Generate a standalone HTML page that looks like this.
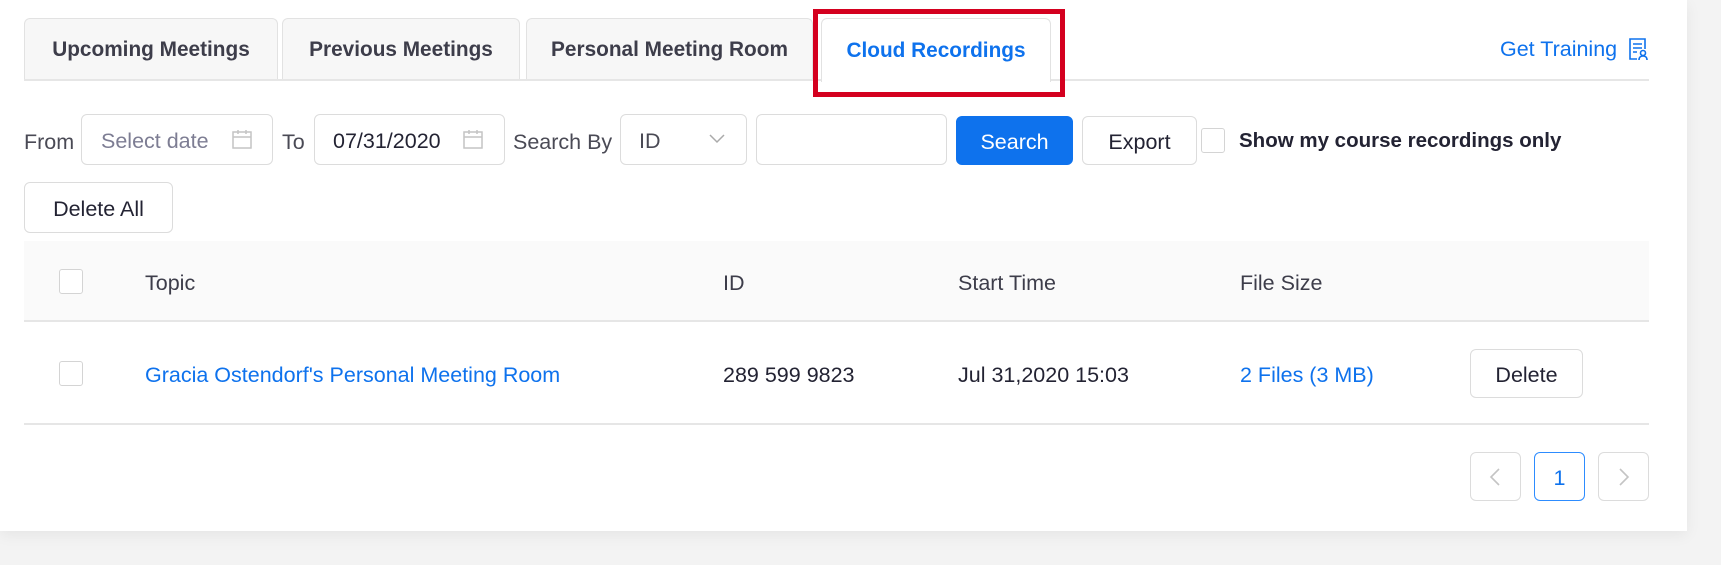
<!DOCTYPE html>
<html><head><meta charset="utf-8"><style>
*{box-sizing:border-box;margin:0;padding:0}
body{width:1721px;height:565px;background:#f3f3f3;font-family:"Liberation Sans",sans-serif;position:relative;overflow:hidden;color:#232333}
.card{position:absolute;left:0;top:0;width:1687px;height:531px;background:#fff;box-shadow:0 4px 14px rgba(0,0,0,0.06)}
.a{position:absolute}
.tab{position:absolute;top:18px;height:62px;background:#f7f7f7;border:1px solid #e2e2e2;border-bottom:none;border-radius:6px 6px 0 0;font-weight:bold;font-size:20.8px;color:#3d3d4a;display:flex;align-items:center;justify-content:center}
.box{position:absolute;border:1.5px solid #dcdcdc;border-radius:6px;background:#fff;display:flex;align-items:center;font-size:21.5px;padding-top:3px}
.lbl{position:absolute;font-size:21.5px;color:#4a4a55;top:130px}
.cb{position:absolute;width:24px;height:25px;border:1.5px solid #d4d4d4;border-radius:3px;background:#fff}
.th{position:absolute;top:271px;font-size:21.5px;color:#3d3d4a}
.td{position:absolute;top:363px;font-size:21.5px}
</style></head><body>
<div class="card"></div>
<div class="tab" style="left:24px;width:254px">Upcoming Meetings</div>
<div class="tab" style="left:282px;width:238px">Previous Meetings</div>
<div class="tab" style="left:526px;width:287px">Personal Meeting Room</div>
<div class="tab" style="left:821px;width:230px;background:#fff;color:#0e72ed;height:64px;z-index:2">Cloud Recordings</div>
<div class="a" style="left:24px;top:79px;width:1625px;height:2px;background:#e6e6e6"></div>
<div class="a" style="left:813px;top:9px;width:252px;height:88px;border:5.5px solid #d4001f;z-index:3"></div>
<div class="a" style="left:1500px;top:37px;font-size:21.5px;color:#0e72ed">Get Training</div>
<svg class="a" style="left:1628px;top:37px" width="20" height="24" viewBox="0 0 20 24" fill="none" stroke="#0e72ed" stroke-width="1.6"><path d="M9 22H2V2h15v10M5 7h9M5 11h9M5 15h4"/><circle cx="15" cy="16" r="2.5"/><path d="M11 23c0-3 2-4 4-4s4 1 4 4"/></svg>

<div class="lbl" style="left:24px">From</div>
<div class="box" style="left:81px;top:114px;width:192px;height:51px;padding-left:19px;color:#7d7d93">Select date</div>
<svg class="a" style="left:232px;top:129px" width="20" height="20" fill="none" stroke="#c4c4c4" stroke-width="1.5"><rect x="1" y="3" width="18" height="16"/><path d="M1 8h18M6 1v4M14 1v4"/></svg>
<div class="lbl" style="left:282px">To</div>
<div class="box" style="left:314px;top:114px;width:191px;height:51px;padding-left:18px;color:#232333">07/31/2020</div>
<svg class="a" style="left:463px;top:129px" width="20" height="20" fill="none" stroke="#c4c4c4" stroke-width="1.5"><rect x="1" y="3" width="18" height="16"/><path d="M1 8h18M6 1v4M14 1v4"/></svg>
<div class="lbl" style="left:513px">Search By</div>
<div class="box" style="left:620px;top:114px;width:127px;height:51px;padding-left:18px;color:#4a4a55">ID</div>
<svg class="a" style="left:709px;top:134px" width="16" height="10" fill="none" stroke="#aaa" stroke-width="1.5"><path d="M1 1l7 7 7-7"/></svg>
<div class="box" style="left:756px;top:114px;width:191px;height:51px"></div>
<div class="box" style="left:956px;top:116px;width:117px;height:49px;background:#0e72ed;border-color:#0e72ed;color:#fff;justify-content:center">Search</div>
<div class="box" style="left:1082px;top:116px;width:115px;height:49px;justify-content:center;color:#232333">Export</div>
<div class="cb" style="left:1201px;top:128px"></div>
<div class="a" style="left:1239px;top:129px;font-size:20.5px;font-weight:bold;color:#232333">Show my course recordings only</div>

<div class="box" style="left:24px;top:182px;width:149px;height:51px;justify-content:center;color:#232333">Delete All</div>

<div class="a" style="left:24px;top:241px;width:1625px;height:81px;background:#fafafa;border-bottom:2px solid #e6e6e6"></div>
<div class="cb" style="left:59px;top:269px"></div>
<div class="th" style="left:145px">Topic</div>
<div class="th" style="left:723px">ID</div>
<div class="th" style="left:958px">Start Time</div>
<div class="th" style="left:1240px">File Size</div>

<div class="cb" style="left:59px;top:361px"></div>
<div class="td" style="left:145px;color:#0e72ed">Gracia Ostendorf's Personal Meeting Room</div>
<div class="td" style="left:723px">289 599 9823</div>
<div class="td" style="left:958px">Jul 31,2020 15:03</div>
<div class="td" style="left:1240px;color:#0e72ed">2 Files (3 MB)</div>
<div class="box" style="left:1470px;top:349px;width:113px;height:49px;justify-content:center;color:#232333">Delete</div>
<div class="a" style="left:24px;top:423px;width:1625px;height:2px;background:#e6e6e6"></div>

<div class="box" style="left:1470px;top:452px;width:51px;height:49px"></div>
<svg class="a" style="left:1489px;top:467px" width="12" height="20" fill="none" stroke="#c4c4c4" stroke-width="1.6"><path d="M10 2L2 10l8 8"/></svg>
<div class="box" style="left:1534px;top:452px;width:51px;height:49px;justify-content:center;color:#0e72ed;border-color:#2d8cff">1</div>
<div class="box" style="left:1598px;top:452px;width:51px;height:49px"></div>
<svg class="a" style="left:1618px;top:467px" width="12" height="20" fill="none" stroke="#c4c4c4" stroke-width="1.6"><path d="M2 2l8 8-8 8"/></svg>
</body></html>
